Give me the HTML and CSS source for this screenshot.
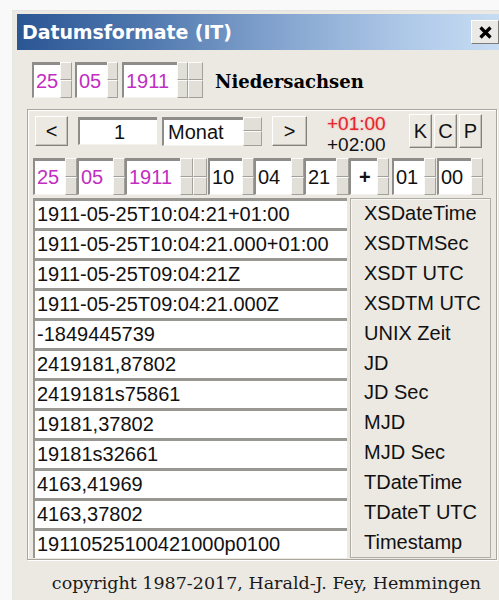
FILE: index.html
```html
<!DOCTYPE html>
<html lang="de">
<head>
<meta charset="utf-8">
<title>Datumsformate (IT)</title>
<link rel="stylesheet" href="styles.css">
</head>
<body>
<div class="window">
  <div class="titlebar">
    <span class="title">Datumsformate (IT)</span>
    <button class="close" type="button" aria-label="Schließen">
      <svg width="28" height="24" viewBox="0 0 28 24" aria-hidden="true">
        <path d="M9.5 7.5 L19.5 17.5 M19.5 7.5 L9.5 17.5" stroke="#000" stroke-width="3.2" fill="none"/>
      </svg>
    </button>
  </div>

  <div class="client">
    <!-- Datum + Bundesland -->
    <div class="row-date">
      <div class="se gap3"><span class="ed w28 magenta">25</span><span class="spin"><i></i><i></i></span></div>
      <div class="se gap4"><span class="ed w32 magenta">05</span><span class="spin s11"><i></i><i></i></span></div>
      <div class="se gap12"><span class="ed w55 magenta">1911</span><span class="spin s11"><i></i><i></i></span><span class="spin s15"><i></i><i></i></span></div>
      <span class="region">Niedersachsen</span>
    </div>

    <div class="group">
      <!-- Schrittweite / Zeitzone / Knöpfe -->
      <div class="row-nav">
        <button class="btn nav-prev" type="button">&lt;</button>
        <span class="ed step">1</span>
        <div class="se unit"><span class="ed w81">Monat</span><span class="spin s19"><i></i><i></i></span></div>
        <button class="btn nav-next" type="button">&gt;</button>
        <div class="tz">
          <span class="tz-now">+01:00</span>
          <span class="tz-dst">+02:00</span>
        </div>
        <button class="btn key first" type="button">K</button>
        <button class="btn key" type="button">C</button>
        <button class="btn key" type="button">P</button>
      </div>

      <!-- Datum, Uhrzeit, Offset -->
      <div class="row-time">
        <div class="se"><span class="ed w32 magenta">25</span><span class="spin"><i></i><i></i></span></div>
        <div class="se"><span class="ed w36 magenta">05</span><span class="spin"><i></i><i></i></span></div>
        <div class="se gap1"><span class="ed w55 magenta">1911</span><span class="spin s13"><i></i><i></i></span><span class="spin s14"><i></i><i></i></span></div>
        <div class="se"><span class="ed w34">10</span><span class="spin"><i></i><i></i></span></div>
        <div class="se"><span class="ed w37">04</span><span class="spin s13"><i></i><i></i></span></div>
        <div class="se"><span class="ed w32">21</span><span class="spin s13"><i></i><i></i></span></div>
        <div class="se gap3"><span class="ed w28 sign">+</span><span class="spin"><i></i><i></i></span></div>
        <div class="se gap1"><span class="ed w32">01</span><span class="spin"><i></i><i></i></span></div>
        <div class="se"><span class="ed w34">00</span><span class="spin"><i></i><i></i></span></div>
      </div>

      <!-- Formate -->
      <div class="list">
        <div class="values">
          <div class="value">1911-05-25T10:04:21+01:00</div>
          <div class="value">1911-05-25T10:04:21.000+01:00</div>
          <div class="value">1911-05-25T09:04:21Z</div>
          <div class="value">1911-05-25T09:04:21.000Z</div>
          <div class="value">-1849445739</div>
          <div class="value">2419181,87802</div>
          <div class="value">2419181s75861</div>
          <div class="value">19181,37802</div>
          <div class="value">19181s32661</div>
          <div class="value">4163,41969</div>
          <div class="value">4163,37802</div>
          <div class="value">19110525100421000p0100</div>
        </div>
        <div class="labels">
          <div class="label">XSDateTime</div>
          <div class="label">XSDTMSec</div>
          <div class="label">XSDT UTC</div>
          <div class="label">XSDTM UTC</div>
          <div class="label">UNIX Zeit</div>
          <div class="label">JD</div>
          <div class="label">JD Sec</div>
          <div class="label">MJD</div>
          <div class="label">MJD Sec</div>
          <div class="label">TDateTime</div>
          <div class="label">TDateT UTC</div>
          <div class="label">Timestamp</div>
        </div>
      </div>
    </div>

    <div class="copyright">copyright 1987-2017, Harald-J. Fey, Hemmingen</div>
  </div>
</div>
</body>
</html>
```

FILE: styles.css
```css
html, body {
  margin: 0;
  padding: 0;
  overflow: hidden;
}

body {
  width: 499px;
  height: 600px;
  background: #f9f9f9;
  font-family: "Liberation Sans", Arial, sans-serif;
  font-size: 20px;
  color: #111;
}

/* ---------- window frame ---------- */
.window {
  box-sizing: border-box;
  width: 492px;
  height: 600px;
  margin: 10px 0 0 12px;
  padding: 3px 0 0 4px;
  background: #ece9e3;
  border-top: 1px solid #e2e2e2;
  border-left: 1px solid #e6e6e6;
}

.titlebar {
  height: 36px;
  display: flex;
  align-items: center;
  justify-content: space-between;
  padding: 0 5px 0 5px;
  background: linear-gradient(90deg, #2a5694 0%, #4d76ad 25%, #86a6d0 55%, #aec8e8 80%, #c9def4 100%);
}

.title {
  font-family: "DejaVu Sans", Verdana, sans-serif;
  font-weight: bold;
  font-size: 19px;
  color: #fff;
  letter-spacing: -0.1px;
}

.close {
  width: 28px;
  height: 24px;
  padding: 0;
  margin: 0;
  display: block;
  background: #ebe9e5;
  border: 1px solid;
  border-color: #fff #7e7c78 #7e7c78 #fff;
}

.close svg {
  display: block;
  margin: -1px;
}

/* ---------- client area ---------- */
.client {
  display: flex;
  flex-direction: column;
  align-items: flex-start;
}

/* spin edit: white field + up/down control */
.se {
  display: flex;
  align-items: stretch;
}

.ed {
  box-sizing: border-box;
  display: flex;
  align-items: center;
  padding-left: 2px;
  background: #fff;
  border-top: 3px solid #8f8d89;
  border-left: 2px solid #8f8d89;
  border-bottom: 1px solid #f4f3f0;
  white-space: nowrap;
  color: #111;
}

.spin {
  display: flex;
  flex-direction: column;
  width: 12px;
}

.spin i {
  flex: 1;
  background: #e2dfd9;
  border: 1px solid;
  border-color: #fbfbfa #a3a09b #a3a09b #fbfbfa;
}

.s11 { width: 11px; }
.s13 { width: 13px; }
.s14 { width: 14px; }
.s15 { width: 15px; }
.s19 { width: 19px; }

.w28 { width: 28px; }
.w32 { width: 32px; }
.w34 { width: 34px; }
.w36 { width: 36px; }
.w37 { width: 37px; }
.w55 { width: 55px; }
.w81 { width: 81px; }

.gap1 { margin-right: 1px; }
.gap3 { margin-right: 3px; }
.gap4 { margin-right: 4px; }
.gap12 { margin-right: 12px; }

.magenta {
  color: #c12ec1;
}

.sign {
  font-weight: bold;
  padding-left: 8px;
}

/* first row */
.row-date {
  display: flex;
  align-items: stretch;
  height: 36px;
  margin: 12px 0 0 15px;
}

.region {
  align-self: center;
  font-family: "DejaVu Serif", "Liberation Serif", serif;
  font-weight: bold;
  font-size: 18px;
  color: #000;
  margin-top: 2px;
}

/* group frame */
.group {
  box-sizing: border-box;
  width: 470px;
  margin: 11px 0 0 10px;
  padding: 2px 0 1px 5px;
  border: 1px solid #a9a6a0;
  box-shadow: inset 1px 1px #fff, 1px 1px #fff;
}

.row-nav {
  display: flex;
  align-items: center;
  height: 38px;
}

.btn {
  box-sizing: border-box;
  height: 30px;
  padding: 0;
  margin: 0;
  font-family: "Liberation Sans", Arial, sans-serif;
  font-size: 20px;
  color: #111;
  background: #ece9e3;
  border: 1px solid;
  border-color: #fff #83817c #83817c #fff;
  box-shadow: inset -1px -1px #c4c1bb;
}

.nav-prev {
  width: 33px;
  margin-left: 2px;
}

.step {
  width: 79px;
  height: 28px;
  justify-content: center;
  margin-left: 10px;
}

.unit {
  height: 29px;
  margin-left: 5px;
}

.unit .ed {
  padding-left: 4px;
}

.nav-next {
  width: 35px;
  margin-left: 10px;
}

/* two offset lines, stacked tight */
.tz {
  display: flex;
  flex-direction: column;
  align-self: flex-start;
  width: 62px;
  margin-left: 20px;
  margin-top: 1px;
  font-size: 19px;
  line-height: 21px;
}

.tz-now {
  color: #e3262b;
  text-shadow: 0 0 2px rgba(255, 110, 110, 0.7);
}

.tz-dst {
  color: #111;
}

.key {
  width: 23px;
  height: 34px;
  margin-left: 2px;
}

.key.first {
  margin-left: 20px;
}

.row-time {
  display: flex;
  height: 37px;
  margin-top: 8px;
}

/* value list + caption panel */
.list {
  display: flex;
  margin-top: 3px;
  height: 360px;
}

.values {
  width: 314px;
  display: flex;
  flex-direction: column;
}

.value {
  box-sizing: border-box;
  height: 30px;
  display: flex;
  align-items: center;
  padding-left: 2px;
  background: #fff;
  border-top: 3px solid #999792;
  border-left: 2px solid #999792;
  white-space: nowrap;
}

.labels {
  box-sizing: border-box;
  width: 141px;
  height: 360px;
  margin-left: 3px;
  display: flex;
  flex-direction: column;
  border: 1px solid #b0ada7;
  box-shadow: inset 1px 1px #f7f6f3;
}

.label {
  flex: 1;
  display: flex;
  align-items: center;
  padding-left: 13px;
  white-space: nowrap;
}

.copyright {
  align-self: stretch;
  margin-top: 12px;
  padding-left: 12px;
  text-align: center;
  font-family: "DejaVu Serif", "Liberation Serif", serif;
  font-size: 17.5px;
  line-height: 22px;
  color: #1a1a1a;
}
```
